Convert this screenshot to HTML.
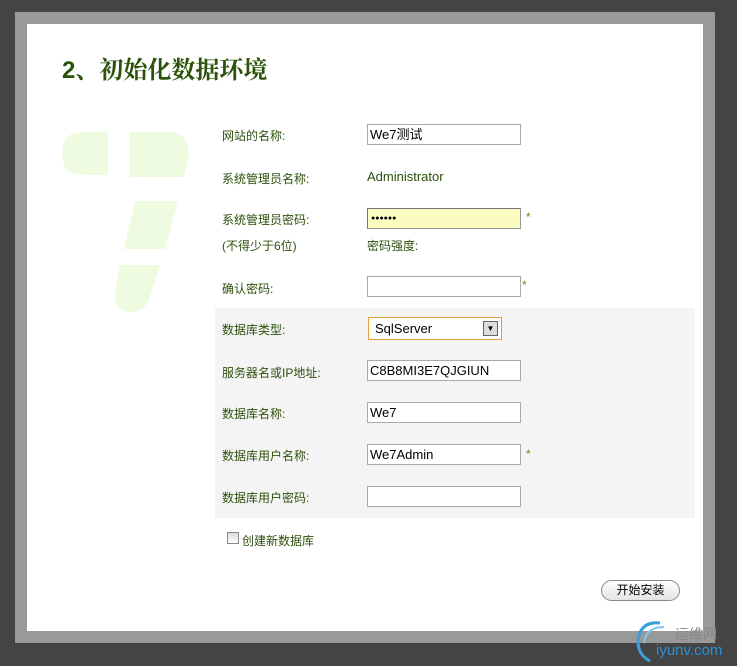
<!DOCTYPE html>
<html><head><meta charset="utf-8"><style>
body{margin:0;width:737px;height:666px;background:#444;position:relative;overflow:hidden;font-family:"Liberation Sans","Noto Sans CJK SC",sans-serif;font-size:12px;color:#2d4f0c}
.frame{position:absolute;left:15px;top:12px;width:700px;height:631px;background:#999}
.white{position:absolute;left:27px;top:24px;width:676px;height:607px;background:#fff}
.t{position:absolute;white-space:nowrap}
.h1{left:62px;top:50px;font-size:24px;font-weight:bold;color:#2a5208;font-family:"Liberation Sans","Noto Serif CJK SC",serif}
.inp{position:absolute;left:367px;border:1px solid #aaa;background:#fff;font-size:13px;color:#000;line-height:19px;padding-left:2px;box-sizing:border-box;width:154px;height:21px}
.star{position:absolute;color:#8a7a20;font-size:12px}
.gray{position:absolute;left:215px;top:308px;width:480px;height:210px;background:#f4f4f4}
</style></head><body>
<div class="frame"></div><div class="white"></div>
<svg style="position:absolute;left:0;top:0" width="737" height="666">
<g fill="#eefbe0">
<path d="M108 132 H83 Q62 132 62 153 Q62 175 83 175 H108 Z"/>
<path d="M130 132 H172 Q190 134 189 158 L184 177 H130 Z"/>
<path d="M135 201 H178 L165 249 H124 Z"/>
<path d="M120 265 H160 L149 300 Q143 312 130 312 Q113 310 115 292 Z"/>
</g></svg>
<div class="t h1">2、初始化数据环境</div>
<div class="gray"></div>
<div class="t" style="left:222px;top:127px">网站的名称:</div>
<div class="inp" style="top:124px">We7测试</div>
<div class="t" style="left:222px;top:170px">系统管理员名称:</div>
<div class="t" style="left:367px;top:169px;font-size:13px">Administrator</div>
<div class="t" style="left:222px;top:211px">系统管理员密码:</div>
<div class="inp" style="top:208px;background:#fbfcc0;border:1px solid #999;border-top-color:#777;border-left-color:#777;font-size:7px;line-height:19px;padding-left:3px">●●●●●●</div>
<div class="star" style="left:526px;top:210px">*</div>
<div class="t" style="left:222px;top:237px">(不得少于6位)</div>
<div class="t" style="left:367px;top:237px">密码强度:</div>
<div class="t" style="left:222px;top:280px">确认密码:</div>
<div class="inp" style="top:276px"></div>
<div class="star" style="left:522px;top:278px">*</div>
<div class="t" style="left:222px;top:321px">数据库类型:</div>
<div style="position:absolute;left:368px;top:317px;width:134px;height:23px;border:1px solid #e0a040;box-sizing:border-box;background:#fff;font-size:13px;color:#000;line-height:21px;padding-left:6px">SqlServer
<div style="position:absolute;right:3px;top:3px;width:15px;height:15px;background:#ddd;border:1px solid #666;box-sizing:border-box;text-align:center;font-size:8px;line-height:13px">▼</div></div>
<div class="t" style="left:222px;top:364px">服务器名或IP地址:</div>
<div class="inp" style="top:360px">C8B8MI3E7QJGIUN</div>
<div class="t" style="left:222px;top:405px">数据库名称:</div>
<div class="inp" style="top:402px">We7</div>
<div class="t" style="left:222px;top:447px">数据库用户名称:</div>
<div class="inp" style="top:444px">We7Admin</div>
<div class="star" style="left:526px;top:447px">*</div>
<div class="t" style="left:222px;top:489px">数据库用户密码:</div>
<div class="inp" style="top:486px"></div>
<div style="position:absolute;left:227px;top:532px;width:12px;height:12px;border:1px solid #888;box-sizing:border-box;background:linear-gradient(#ddd,#fff)"></div>
<div class="t" style="left:242px;top:532px">创建新数据库</div>
<div style="position:absolute;left:601px;top:580px;width:79px;height:21px;border:1px solid #888;border-radius:11px;box-sizing:border-box;background:linear-gradient(#fff,#e4e4e4);text-align:center;line-height:19px;color:#000">开始安装</div>
<svg style="position:absolute;left:630px;top:615px" width="40" height="50"><path d="M30 8 Q10 6 8 26 Q8 40 20 46" stroke="#3a9fd8" stroke-width="3" fill="none"/><path d="M34 12 Q16 12 14 28" stroke="#7cc6ef" stroke-width="2" fill="none"/></svg>
<div class="t" style="left:675px;top:624px;font-size:14px;color:#888">运维网</div>
<div class="t" style="left:656px;top:642px;font-size:15px;color:#2f8fd0">iyunv.com</div>
</body></html>
